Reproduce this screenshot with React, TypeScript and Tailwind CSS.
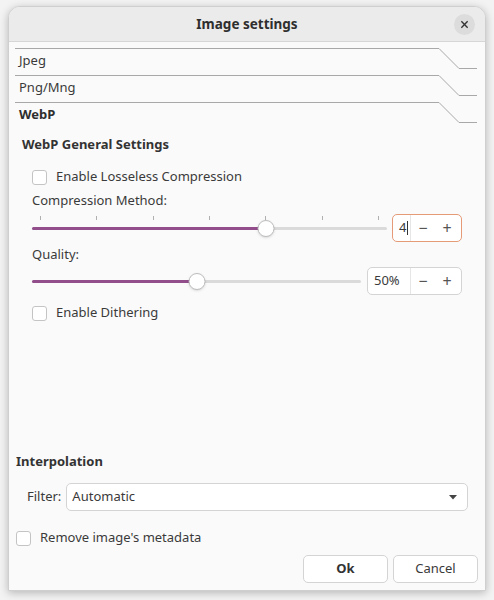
const font = { fontFamily: '"Noto Sans", "Open Sans", sans-serif' };

function TabRow({ label, bold }: { label: string; bold?: boolean }) {
  return (
    <div className="flex h-[27px]">
      <div className="flex-1 border-t border-[#a8a8a8] pl-[4px] pt-[2px]">
        <span className={bold ? "font-bold text-[#2e2e2e]" : "text-[#3a3a3a]"}>{label}</span>
      </div>
      <svg width="38" height="27" className="shrink-0">
        <path d="M0 0.5 L20 20.5 L38 20.5" fill="none" stroke="#a8a8a8" strokeWidth="1" />
      </svg>
    </div>
  );
}

function Checkbox({ label }: { label: string }) {
  return (
    <div className="flex items-center gap-[9px]">
      <div className="w-[15px] h-[15px] rounded-[3px] border border-[#c4c4c4] bg-white" />
      <span className="text-[#3a3a3a]">{label}</span>
    </div>
  );
}

function Slider({ pct, ticks }: { pct: number; ticks?: number }) {
  return (
    <div className="flex-1 flex flex-col">
      {ticks ? (
        <div className="flex justify-between px-[8px] h-[4px] mt-[4px]">
          {Array.from({ length: ticks }).map((_, i) => (
            <div key={i} className="w-px h-[4px] bg-[#b0b0b0]" />
          ))}
        </div>
      ) : null}
      <div className={`relative flex items-center ${ticks ? "h-[16px]" : "h-[20px]"}`}>
        <div className="w-full h-[3px] rounded-full bg-[#dadada]" />
        <div className="absolute left-0 h-[3px] rounded-full bg-[#924d8b]" style={{ width: `${pct}%` }} />
        <div
          className="absolute w-[17px] h-[17px] rounded-full bg-white border border-[#bdbdbd] shadow-sm -translate-x-1/2"
          style={{ left: `${pct}%` }}
        />
      </div>
    </div>
  );
}

function Spin({ value, focused, width }: { value: string; focused?: boolean; width: string }) {
  return (
    <div
      className={`flex items-center h-[28px] rounded-[5px] bg-white border ${
        focused ? "border-[#e59b77] -mb-[6px]" : "border-[#d4d4d4]"
      } ${width}`}
    >
      <div className="flex-1 pl-[6px] text-[#3a3a3a] flex items-center">
        {value}
        {focused ? <span className="inline-block w-px h-[14px] bg-[#333] ml-px" /> : null}
      </div>
      <div className="w-px self-stretch bg-[#e6e6e6]" />
      <div className="w-[24px] text-center text-[#555] text-[16px]">−</div>
      <div className="w-[24px] text-center text-[#555] text-[16px] mr-[2px]">+</div>
    </div>
  );
}

export default function App() {
  return (
    <div className="w-[494px] h-[600px] bg-[#f3f3f3] pt-[6px] px-[8px] text-[13px]" style={font}>
      <div className="w-[478px] h-[585px] rounded-t-[12px] bg-[#fafafa] border border-[#cfcfcf] shadow-[0_2px_8px_rgba(0,0,0,0.25)] flex flex-col overflow-hidden">
        <div className="h-[35px] shrink-0 bg-[#ebebeb] border-b border-[#d6d6d6] flex items-center justify-center relative">
          <span className="font-bold text-[#2e2e2e] text-[13.5px]">Image settings</span>
          <div className="absolute right-[10px] top-[7px] w-[21px] h-[21px] rounded-full bg-[#dcdcdc] flex items-center justify-center">
            <svg width="9" height="9" viewBox="0 0 10 10">
              <path d="M1.5 1.5 L8.5 8.5 M8.5 1.5 L1.5 8.5" stroke="#333" strokeWidth="1.5" />
            </svg>
          </div>
        </div>

        <div className="pt-[6px] pl-[6px] pr-[8px] flex flex-col">
          <TabRow label="Jpeg" />
          <TabRow label="Png/Mng" />
          <TabRow label="WebP" bold />
        </div>

        <div className="pl-[13px] pr-[23px] pt-[3px] flex flex-col">
          <div className="font-bold text-[#333] h-[26px] flex items-center">WebP General Settings</div>
          <div className="pl-[10px] flex flex-col">
            <div className="mt-[8px] h-[22px] flex items-center">
              <Checkbox label="Enable Losseless Compression" />
            </div>
            <div className="mt-[2px] h-[22px] flex items-center text-[#3a3a3a]">Compression Method:</div>
            <div className="flex items-end gap-[5px]">
              <Slider pct={66} ticks={7} />
              <Spin value="4" focused width="w-[70px]" />
            </div>
            <div className="mt-[8px] h-[22px] flex items-center text-[#3a3a3a]">Quality:</div>
            <div className="flex items-center gap-[6px] mt-[1px]">
              <Slider pct={50} />
              <Spin value="50%" width="w-[95px]" />
            </div>
            <div className="mt-[7px] h-[22px] flex items-center">
              <Checkbox label="Enable Dithering" />
            </div>
          </div>
        </div>

        <div className="flex-1" />

        <div className="pl-[7px] pr-[7px] flex flex-col">
          <div className="font-bold text-[#333] h-[24px] flex items-center">Interpolation</div>
          <div className="mt-[9px] flex items-center gap-[5px] pl-[11px]">
            <span className="text-[#3a3a3a]">Filter:</span>
            <div className="flex-1 h-[28px] rounded-[5px] bg-white border border-[#d4d4d4] flex items-center pl-[5px] pr-[10px] mr-[10px]">
              <span className="flex-1 text-[#3a3a3a]">Automatic</span>
              <svg width="8" height="5" viewBox="0 0 8 5">
                <path d="M0 0 L8 0 L4 4.5 Z" fill="#444" />
              </svg>
            </div>
          </div>
          <div className="mt-[17px] h-[20px] flex items-center">
            <Checkbox label="Remove image's metadata" />
          </div>
          <div className="mt-[7px] mb-[7px] flex justify-end gap-[5px]">
            <div className="w-[85px] h-[28px] rounded-[5px] bg-white border border-[#d4d4d4] flex items-center justify-center font-bold text-[#333]">
              Ok
            </div>
            <div className="w-[85px] h-[28px] rounded-[5px] bg-white border border-[#d4d4d4] flex items-center justify-center text-[#3a3a3a]">
              Cancel
            </div>
          </div>
        </div>
      </div>
    </div>
  );
}
